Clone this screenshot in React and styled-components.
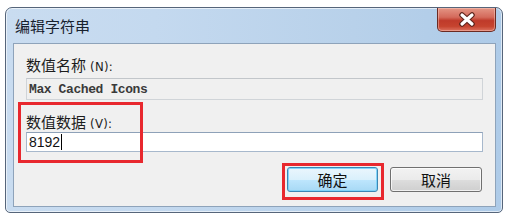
import styled, { createGlobalStyle } from "styled-components";

const GlobalStyle = createGlobalStyle`
  body {
    margin: 0;
    background: #ffffff;
    font-family: "Noto Sans CJK SC", "Noto Sans", sans-serif;
  }
`;

const Page = styled.div`
  width: 510px;
  height: 220px;
  padding: 7px 0 0 5px;
  box-sizing: border-box;
`;

const Window = styled.div`
  width: 498px;
  height: 206px;
  box-sizing: border-box;
  border: 1px solid #56657a;
  border-radius: 7px 7px 5px 5px;
  background: linear-gradient(90deg, #c9dcf0 0%, #c4d9ef 30%, #b8d1ea 70%, #aecbe8 100%);
  box-shadow: inset 0 0 0 1px rgba(255, 255, 255, 0.6);
  padding: 0 6px 5px 7px;
  display: flex;
  flex-direction: column;
`;

const TitleBar = styled.div`
  height: 35px;
  display: flex;
  align-items: flex-start;
  justify-content: space-between;
`;

const Title = styled.div`
  font-size: 15px;
  line-height: 16px;
  color: #17212e;
  padding: 10px 0 0 2px;
`;

const CloseButton = styled.div`
  width: 59px;
  height: 24px;
  box-sizing: border-box;
  border: 1px solid #6b2a22;
  border-top: none;
  border-radius: 0 0 5px 5px;
  background: linear-gradient(180deg, #e49585 0%, #d46a5b 40%, #bf3a2a 55%, #c6442f 80%, #dc7260 100%);
  display: flex;
  align-items: center;
  justify-content: center;
  box-shadow: inset 0 0 0 1px rgba(255, 220, 210, 0.4);
`;

const Client = styled.div`
  flex: 1;
  border: 1px solid #8ea3ba;
  background: #f0f0f0;
  padding: 13px 12px 0 12px;
  display: flex;
  flex-direction: column;
  position: relative;
`;

const Label = styled.div`
  font-size: 15px;
  line-height: 16px;
  color: #1c1c1c;
  height: 16px;
  margin-top: ${(p) => p.$mt || 0}px;
  & span {
    font-family: "DejaVu Sans Condensed", "Liberation Sans Narrow", "Liberation Sans", sans-serif;
    font-size: 13px;
    letter-spacing: 0.3px;
  }
`;

const Field = styled.div`
  box-sizing: border-box;
  height: ${(p) => p.$h}px;
  margin-top: ${(p) => p.$mt}px;
  border: 1px solid ${(p) => (p.$disabled ? "#d0d4d8" : "#a7b8cc")};
  border-top-color: ${(p) => (p.$disabled ? "#c2c6ca" : "#8ea1b8")};
  background: ${(p) => (p.$disabled ? "#f0f0f0" : "#ffffff")};
  display: flex;
  align-items: center;
  padding-left: 2px;
`;

const MonoText = styled.span`
  font-family: "Liberation Mono", monospace;
  font-size: 13px;
  font-weight: bold;
  color: #3a3a3a;
  letter-spacing: -0.4px;
`;

const ValueText = styled.span`
  font-family: "Liberation Sans", Arial, sans-serif;
  font-size: 14px;
  color: #111;
`;

const Caret = styled.span`
  display: inline-block;
  width: 1px;
  height: 16px;
  background: #000;
  margin-left: 1px;
`;

const ButtonRow = styled.div`
  display: flex;
  justify-content: flex-end;
  gap: 12px;
  margin-top: 15px;
  margin-right: 1px;
`;

const Button = styled.div`
  width: ${(p) => p.$w}px;
  height: 25px;
  box-sizing: border-box;
  border-radius: 3px;
  border: 1px solid ${(p) => (p.$focused ? "#3b86b4" : "#707070")};
  background: ${(p) =>
    p.$focused
      ? "linear-gradient(180deg, #eaf6fd 0%, #d9f0fc 50%, #bee6fd 51%, #a7d9f5 100%)"
      : "linear-gradient(180deg, #f2f2f2 0%, #ebebeb 50%, #dddddd 51%, #cfcfcf 100%)"};
  box-shadow: inset 0 0 0 1px ${(p) => (p.$focused ? "rgba(120,210,250,0.9)" : "rgba(255,255,255,0.7)")};
  display: flex;
  align-items: center;
  justify-content: center;
  font-size: 15px;
  color: #111;
`;

const Highlight = styled.div`
  position: absolute;
  box-sizing: border-box;
  border: 3px solid #e8282e;
  left: ${(p) => p.$x}px;
  top: ${(p) => p.$y}px;
  width: ${(p) => p.$w}px;
  height: ${(p) => p.$h}px;
  pointer-events: none;
`;

function CloseIcon() {
  return (
    <svg width="18" height="15" viewBox="0 0 18 15">
      <path d="M4 3 L14 12 M14 3 L4 12" stroke="#5e241c" strokeWidth="5.5" strokeLinecap="round" />
      <path d="M4 3 L14 12 M14 3 L4 12" stroke="#ffffff" strokeWidth="3.2" strokeLinecap="round" />
    </svg>
  );
}

export default function App() {
  return (
    <>
      <GlobalStyle />
      <Page>
        <Window>
          <TitleBar>
            <Title>编辑字符串</Title>
            <CloseButton>
              <CloseIcon />
            </CloseButton>
          </TitleBar>
          <Client>
            <Label>
              数值名称<span> (N):</span>
            </Label>
            <Field $h={22} $mt={5} $disabled>
              <MonoText>Max Cached Icons</MonoText>
            </Field>
            <Label $mt={14}>
              数值数据<span> (V):</span>
            </Label>
            <Field $h={20} $mt={2}>
              <ValueText>8192</ValueText>
              <Caret />
            </Field>
            <ButtonRow>
              <Button $w={91} $focused>
                确定
              </Button>
              <Button $w={92}>取消</Button>
            </ButtonRow>
            <Highlight $x={4} $y={58} $w={125} $h={61} />
            <Highlight $x={268} $y={119} $w={102} $h={37} />
          </Client>
        </Window>
      </Page>
    </>
  );
}
